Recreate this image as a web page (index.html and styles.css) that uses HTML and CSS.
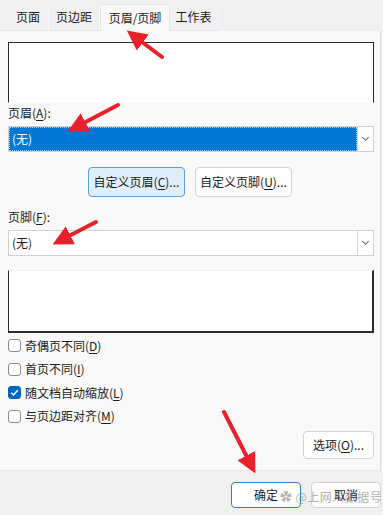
FILE: index.html
```html
<!DOCTYPE html>
<html>
    <head>
        <title>页面设置</title>
        <link rel="stylesheet" href="styles.css">
    </head>
    <body>
        <div class="tabs">
            <div class="tab tab1">页面</div>
            <div class="tab tab2">页边距</div>
            <div class="tab active">页眉/页脚</div>
            <div class="tab tab4">工作表</div>
        </div>

        <div class="panel">
            <div class="preview previewHead"></div>

            <div class="fieldLabel">页眉(<u>A</u>):</div>
            <div class="combo focused">
                <div class="comboValue">(无)</div>
                <div class="comboArrow"><span class="chev"></span></div>
            </div>

            <div class="customRow">
                <div class="btn btnHover">自定义页眉(<u>C</u>)...</div>
                <div class="btn">自定义页脚(<u>U</u>)...</div>
            </div>

            <div class="fieldLabel labelFoot">页脚(<u>F</u>):</div>
            <div class="combo">
                <div class="comboValue">(无)</div>
                <div class="comboArrow"><span class="chev"></span></div>
            </div>

            <div class="preview previewFoot"></div>

            <div class="checks">
                <div class="checkRow"><span class="box"></span>奇偶页不同(<u>D</u>)</div>
                <div class="checkRow"><span class="box"></span>首页不同(<u>I</u>)</div>
                <div class="checkRow"><span class="box checked"><svg width="13" height="13" viewBox="0 0 13 13"><path d="M3.2 6.8 L5.4 9 L9.8 4.2" fill="none" stroke="#fff" stroke-width="1.4"/></svg></span>随文档自动缩放(<u>L</u>)</div>
                <div class="checkRow"><span class="box"></span>与页边距对齐(<u>M</u>)</div>
            </div>

            <div class="optionsRow">
                <div class="btn btnOptions">选项(<u>O</u>)...</div>
            </div>
        </div>

        <div class="footer">
            <div class="btn btnDialog btnDefault">确定</div>
            <div class="btn btnDialog">取消</div>
        </div>

        <div class="watermark"><span class="wmIcon">✿</span>@上网人数据号</div>

        <!-- annotation arrows drawn over the dialog -->
        <svg class="arrows" width="383" height="515" viewBox="0 0 383 515">
            <defs>
                <marker id="head" markerWidth="5" markerHeight="5" refX="1.5" refY="2.5" orient="auto" markerUnits="strokeWidth">
                    <path d="M0 0 L5 2.5 L0 5 Z" fill="#e8212b"/>
                </marker>
            </defs>
            <line x1="162" y1="57" x2="138" y2="39" stroke="#e8212b" stroke-width="4" stroke-linecap="round" marker-end="url(#head)"/>
            <line x1="118" y1="105" x2="80" y2="125" stroke="#e8212b" stroke-width="4" stroke-linecap="round" marker-end="url(#head)"/>
            <line x1="96" y1="222" x2="65" y2="238" stroke="#e8212b" stroke-width="4" stroke-linecap="round" marker-end="url(#head)"/>
            <line x1="224" y1="412" x2="249" y2="461" stroke="#e8212b" stroke-width="4" stroke-linecap="round" marker-end="url(#head)"/>
        </svg>
    </body>
</html>
```

FILE: styles.css
```css
body{
    margin: 0;
    padding: 0;
    width: 383px;
    height: 515px;
    overflow: hidden;
    background-color: #f0f0f0;
    font-family: "Noto Sans CJK SC", "Noto Sans", sans-serif;
    font-size: 12px;
    line-height: 16px;
    color: #1b1b1b;
    position: relative;
}

u{
    text-decoration-thickness: 1px;
    text-underline-offset: 2px;
}

/* tab strip */
.tabs{
    height: 31px;
    display: flex;
    align-items: flex-end;
}

.tab{
    height: 26px;
    box-sizing: border-box;
    padding-top: 4px;
    text-align: center;
    border-right: 1px solid #f8f8f8;
    border-bottom: 1px solid #e4e4e4;
}

.tab1{
    width: 49px;
    padding-left: 8px;
}

.tab2{
    width: 51px;
}

.tab4{
    width: 48px;
}

.active{
    width: 70px;
    height: 27px;
    padding-top: 5px;
    background-color: #f9f9f9;
    border: 1px solid #e6e6e6;
    border-bottom: none;
    border-radius: 2px 2px 0 0;
}

/* main page */
.panel{
    background-color: #f9f9f9;
    margin-right: 2px;
    padding: 11px 6px 11px 8px;
    border-right: 1px solid #e2e2e2;
    border-bottom: 1px solid #e8e8e8;
}

.preview{
    background-color: #ffffff;
    border: 1px solid #2a2a2a;
}

.previewHead{
    height: 59px;
    border-bottom-color: #ffffff;
}

.previewFoot{
    height: 60px;
    margin-top: 14px;
    border-top-color: #f4f4f4;
    border-width: 1px 2px 2px 1px;
}

.fieldLabel{
    margin-top: 2px;
    height: 16px;
}

.labelFoot{
    margin-top: 12px;
}

.combo{
    margin-top: 5px;
    height: 26px;
    box-sizing: border-box;
    display: flex;
    background-color: #ffffff;
    border: 1px solid #cfcfcf;
}

.comboValue{
    flex: 1;
    padding-left: 3px;
    line-height: 24px;
}

.focused .comboValue{
    background-color: #0078d4;
    color: #ffffff;
    outline: 1px dotted #9cc8ef;
    outline-offset: -1px;
}

.comboArrow{
    width: 15px;
    border-left: 1px solid #d6d6d6;
    display: flex;
    align-items: center;
    justify-content: center;
}

.chev{
    width: 4px;
    height: 4px;
    border-right: 1px solid #6a6a6a;
    border-bottom: 1px solid #6a6a6a;
    transform: rotate(45deg);
    margin-top: -3px;
}

/* buttons */
.btn{
    box-sizing: border-box;
    border: 1px solid #d2d2d2;
    border-radius: 4px;
    background-color: #fdfdfd;
    display: flex;
    align-items: center;
    justify-content: center;
}

.customRow{
    display: flex;
    gap: 10px;
    margin-top: 15px;
    padding-left: 80px;
}

.customRow .btn{
    width: 97px;
    height: 30px;
}

.btnHover{
    background-color: #e0eef9;
    border-color: #5a9ede;
}

.checks{
    margin-top: 1px;
}

.checkRow{
    height: 23.5px;
    display: flex;
    align-items: center;
}

.box{
    width: 13px;
    height: 13px;
    box-sizing: border-box;
    border: 1px solid #8b8b8b;
    border-radius: 3px;
    background-color: #ffffff;
    margin-right: 4px;
    display: flex;
}

.box.checked{
    background-color: #0067c0;
    border-color: #0067c0;
}

.box svg{
    margin: -1px;
}

.optionsRow{
    display: flex;
    justify-content: flex-end;
    margin-top: 3px;
}

.btnOptions{
    width: 71px;
    height: 28px;
}

/* dialog buttons */
.footer{
    display: flex;
    justify-content: flex-end;
    gap: 10px;
    padding: 11px 2px 0 0;
}

.btnDialog{
    width: 70px;
    height: 26px;
}

.btnDefault{
    border-color: #2f7fd0;
    background-color: #ffffff;
}

.watermark{
    position: absolute;
    left: 280px;
    top: 489px;
    color: rgba(110, 110, 110, 0.55);
    font-size: 12px;
    letter-spacing: 0.5px;
}

.wmIcon{
    margin-right: 3px;
}

.arrows{
    position: absolute;
    left: 0;
    top: 0;
    pointer-events: none;
}
```
